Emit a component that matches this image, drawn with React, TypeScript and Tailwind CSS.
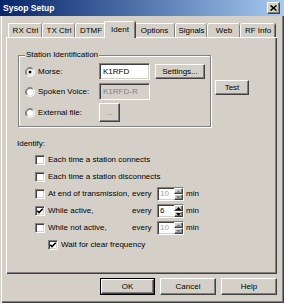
import { FC, ReactNode } from 'react'

const sunken =
  'border border-t-[#808080] border-l-[#808080] border-b-white border-r-white shadow-[inset_1px_1px_0_#404040,inset_-1px_-1px_0_#d4d0c8]'
const raised =
  'border border-t-white border-l-white border-b-[#404040] border-r-[#404040] shadow-[inset_-1px_-1px_0_#808080] bg-[#d4d0c8]'

const tabs = [
  { label: 'RX Ctrl', w: 'w-[34px]' },
  { label: 'TX Ctrl', w: 'w-[33px]' },
  { label: 'DTMF', w: 'w-[31px]' },
  { label: 'Ident', w: 'w-[31px]', active: true },
  { label: 'Options', w: 'w-[42px]' },
  { label: 'Signals', w: 'w-[32px]' },
  { label: 'Web', w: 'w-[33px]' },
  { label: 'RF Info', w: 'w-[35px]' },
]

const Button: FC<{ className?: string; children: ReactNode }> = ({ className, children }) => (
  <div className={`${raised} flex items-center justify-center leading-none ${className ?? ''}`}>
    {children}
  </div>
)

const Radio: FC<{ checked?: boolean }> = ({ checked }) => (
  <svg width="10" height="10" viewBox="0 0 12 12" className="shrink-0">
    <circle cx="6" cy="6" r="5.5" fill="#fff" />
    <path d="M2.1 9.9 A5.5 5.5 0 0 1 9.9 2.1" stroke="#808080" fill="none" />
    <path d="M9.9 2.1 A5.5 5.5 0 0 1 2.1 9.9" stroke="#fff" fill="none" />
    <path d="M2.8 9.2 A4.5 4.5 0 0 1 9.2 2.8" stroke="#404040" fill="none" />
    <path d="M9.2 2.8 A4.5 4.5 0 0 1 2.8 9.2" stroke="#d4d0c8" fill="none" />
    {checked && <circle cx="6" cy="6" r="1.8" fill="#000" />}
  </svg>
)

const Check: FC<{ checked?: boolean }> = ({ checked }) => (
  <div className={`${sunken} w-[10px] h-[10px] shrink-0 bg-white flex items-center justify-center`}>
    {checked && (
      <svg width="8" height="8" viewBox="0 0 8 8">
        <polyline points="1.2,3.8 3,5.6 6.8,1.8" stroke="#000" strokeWidth="1.6" fill="none" />
      </svg>
    )}
  </div>
)

const Spin: FC<{ value: string; disabled?: boolean }> = ({ value, disabled }) => (
  <div className={`${sunken} flex w-[27px] h-[14px] bg-white shrink-0`}>
    <div className={`flex-1 pl-[2px] leading-[12px] ${disabled ? 'text-[#a0a0a0]' : 'text-black'}`}>
      {value}
    </div>
    <div className="flex flex-col w-[9px]">
      <div className={`${raised} flex-1 flex items-center justify-center`}>
        <svg width="5" height="3" viewBox="0 0 5 3">
          <polygon points="2.5,0 5,3 0,3" fill={disabled ? '#808080' : '#000'} />
        </svg>
      </div>
      <div className={`${raised} flex-1 flex items-center justify-center`}>
        <svg width="5" height="3" viewBox="0 0 5 3">
          <polygon points="0,0 5,0 2.5,3" fill={disabled ? '#808080' : '#000'} />
        </svg>
      </div>
    </div>
  </div>
)

const CheckRow: FC<{ label: string; checked?: boolean; every?: string; disabled?: boolean }> = ({
  label,
  checked,
  every,
  disabled,
}) => (
  <div className="flex items-center h-[14px] ml-[29px]">
    <Check checked={checked} />
    {every ? (
      <>
        <span className="ml-[3px] w-[84px] whitespace-nowrap">{label}</span>
        <span className="w-[25px]">every</span>
        <Spin value={every} disabled={disabled} />
        <span className="ml-[2px]">min</span>
      </>
    ) : (
      <span className="ml-[3px] whitespace-nowrap">{label}</span>
    )}
  </div>
)

export default function App() {
  return (
    <div className="w-[284px] h-[303px] flex flex-col bg-[#d4d0c8] font-['Liberation_Sans',Arial,sans-serif] text-[8px] text-black overflow-hidden">
      {/* title bar */}
      <div className="h-[16px] shrink-0 flex items-center justify-between pl-[3px] pr-[4px] bg-linear-to-r from-[#0a246a] to-[#a6caf0]">
        <span className="text-white font-bold text-[8.5px]">Sysop Setup</span>
        <div className={`${raised} w-[13px] h-[12px] flex items-center justify-center`}>
          <svg width="7" height="6" viewBox="0 0 7 6">
            <path d="M0.5 0.5 L6.5 5.5 M6.5 0.5 L0.5 5.5" stroke="#000" strokeWidth="1.6" />
          </svg>
        </div>
      </div>

      <div className="flex-1 flex flex-col shadow-[inset_1px_0_0_#d4d0c8,inset_2px_0_0_#ffffff,inset_-1px_-1px_0_#404040,inset_-2px_-2px_0_#808080]">
        {/* tabs */}
        <div className="h-[21px] flex items-end pl-[8px]">
          {tabs.map((t) =>
            t.active ? (
              <div
                key={t.label}
                className={`${t.w} h-[17px] -mx-[2px] -mb-px relative z-10 bg-[#d4d0c8] rounded-t-[2px] border-t border-l border-white shadow-[inset_-1px_0_0_#808080,1px_0_0_#404040] flex items-start justify-center pt-[2px]`}
              >
                {t.label}
              </div>
            ) : (
              <div
                key={t.label}
                className={`${t.w} h-[14px] rounded-t-[2px] border-t border-l border-white shadow-[inset_-1px_0_0_#808080,1px_0_0_#404040] flex items-center justify-center`}
              >
                {t.label}
              </div>
            ),
          )}
        </div>

        {/* panel */}
        <div className="ml-[6px] w-[271px] h-[237px] flex flex-col shadow-[inset_1px_1px_0_#ffffff,inset_-1px_-1px_0_#404040,inset_-2px_-2px_0_#808080]">
          <div className="mt-[18px] ml-[12px] flex items-start">
            <div className="relative w-[193px] h-[72px] border border-[#808080] shadow-[inset_1px_1px_0_#fff,1px_1px_0_#fff] flex flex-col pt-[7px] pl-[6px]">
              <span className="absolute left-[6px] -top-[6px] px-[1px] bg-[#d4d0c8] leading-[10px]">
                Station Identification
              </span>
              <div className="flex items-center h-[17px]">
                <Radio checked />
                <span className="ml-[3px] w-[61px]">Morse:</span>
                <div className={`${sunken} w-[51px] h-[17px] bg-white pl-[3px] flex items-center`}>K1RFD</div>
                <Button className="ml-[5px] w-[50px] h-[15px]">Settings...</Button>
              </div>
              <div className="flex items-center h-[17px] mt-[3px]">
                <Radio />
                <span className="ml-[3px] w-[61px]">Spoken Voice:</span>
                <div className={`${sunken} w-[51px] h-[17px] bg-[#d4d0c8] text-[#808080] pl-[3px] flex items-center`}>
                  K1RFD-R
                </div>
              </div>
              <div className="flex items-center h-[19px] mt-[3px]">
                <Radio />
                <span className="ml-[3px] w-[61px]">External file:</span>
                <Button className="w-[21px] h-[19px] text-[#808080]">...</Button>
              </div>
            </div>
            <Button className="ml-[4px] mt-[25px] w-[34px] h-[15px]">Test</Button>
          </div>

          <div className="mt-[12px] ml-[11px] leading-[10px]">Identify:</div>
          <div className="mt-[4px] flex flex-col gap-[3px]">
            <CheckRow label="Each time a station connects" />
            <CheckRow label="Each time a station disconnects" />
            <CheckRow label="At end of transmission," every="10" disabled />
            <CheckRow label="While active," every="6" checked />
            <CheckRow label="While not active," every="10" disabled />
            <div className="flex items-center h-[14px] ml-[42px]">
              <Check checked />
              <span className="ml-[3px]">Wait for clear frequency</span>
            </div>
          </div>
        </div>

        {/* dialog buttons */}
        <div className="mt-[4px] pr-[7px] flex justify-end gap-[5px]">
          <div className="border border-black">
            <Button className="w-[53px] h-[15px]">OK</Button>
          </div>
          <Button className="w-[56px] h-[17px]">Cancel</Button>
          <Button className="w-[56px] h-[17px]">Help</Button>
        </div>
      </div>
    </div>
  )
}
